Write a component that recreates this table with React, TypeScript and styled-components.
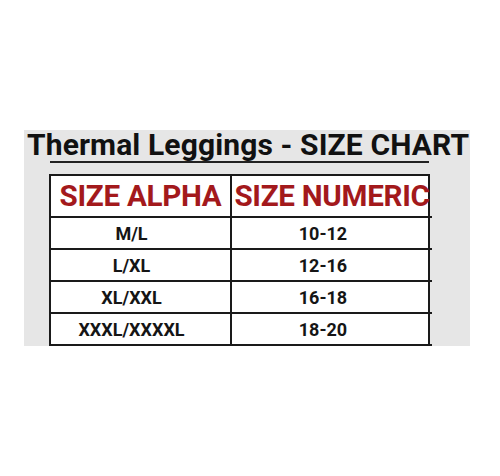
import React from "react";
import styled, { createGlobalStyle } from "styled-components";

const GlobalStyle = createGlobalStyle`
  body {
    margin: 0;
    background: #ffffff;
    font-family: Roboto, "Liberation Sans", Arial, sans-serif;
  }
`;

const Page = styled.div`
  width: 500px;
  height: 476px;
  padding-top: 130px;
  box-sizing: border-box;
`;

const Panel = styled.div`
  margin-left: 24px;
  width: 446px;
  background: #e6e6e6;
  display: flex;
  flex-direction: column;
  align-items: flex-start;
`;

const Title = styled.h1`
  margin: 0 0 0 3px;
  font-size: 30px;
  line-height: 30px;
  font-weight: 700;
  color: #111;
  letter-spacing: 0.12px;
  white-space: nowrap;
`;

const Rule = styled.div`
  flex-shrink: 0;
  margin: 1px 0 0 26px;
  width: 379px;
  height: 2px;
  background: #222;
`;

const Table = styled.div`
  margin: 11px 0 0 25px;
  width: 381px;
  display: grid;
  grid-template-columns: 181px 200px;
  border: 2px solid #1a1a1a;
  border-bottom: none;
  box-sizing: border-box;
  background: #fff;
`;

const Cell = styled.div<{ $head?: boolean; $last?: boolean }>`
  height: ${(p) => (p.$head ? 42 : 32)}px;
  display: flex;
  align-items: center;
  justify-content: center;
  padding-right: ${(p) => (p.$head ? 0 : 18)}px;
  border-bottom: 2px solid #1a1a1a;
  border-right: ${(p) => (p.$last ? "none" : "2px solid #1a1a1a")};
  box-sizing: border-box;
  font-weight: 700;
  white-space: nowrap;
  color: ${(p) => (p.$head ? "#a3191c" : "#151515")};
  font-size: ${(p) => (p.$head ? 29.6 : 18)}px;
  letter-spacing: ${(p) => (p.$head ? "-0.3px" : "0")};
`;

const rows = [
  ["M/L", "10-12"],
  ["L/XL", "12-16"],
  ["XL/XXL", "16-18"],
  ["XXXL/XXXXL", "18-20"],
];

export default function App() {
  return (
    <Page>
      <GlobalStyle />
      <Panel>
        <Title>Thermal Leggings - SIZE CHART</Title>
        <Rule />
        <Table>
          <Cell $head>SIZE ALPHA</Cell>
          <Cell $head $last>
            SIZE NUMERIC
          </Cell>
          {rows.map(([a, n]) => (
            <React.Fragment key={a}>
              <Cell>{a}</Cell>
              <Cell $last>{n}</Cell>
            </React.Fragment>
          ))}
        </Table>
      </Panel>
    </Page>
  );
}
